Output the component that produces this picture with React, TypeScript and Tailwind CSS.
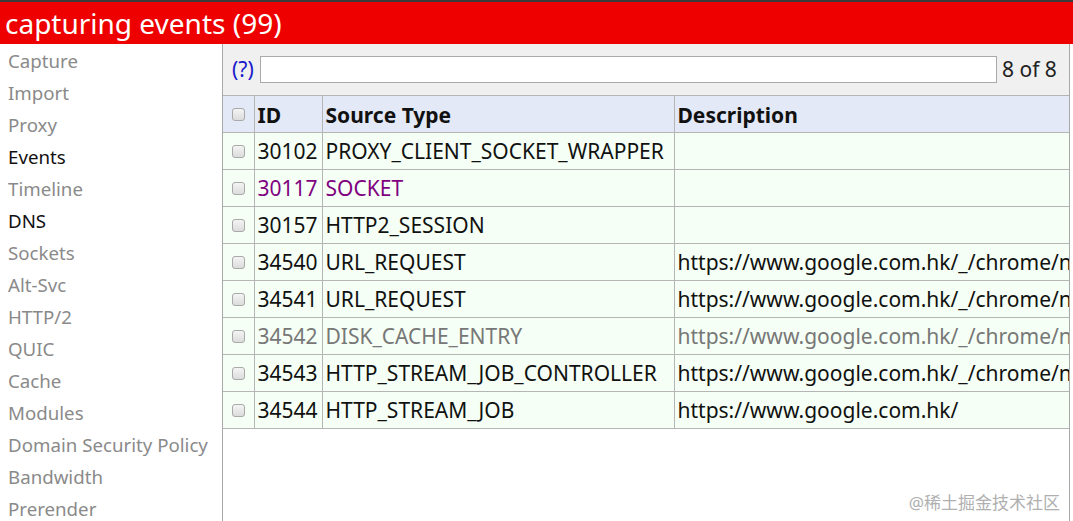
import React from 'react'

const NAV = [
  { label: 'Capture' },
  { label: 'Import' },
  { label: 'Proxy' },
  { label: 'Events', active: true },
  { label: 'Timeline' },
  { label: 'DNS', active: true },
  { label: 'Sockets' },
  { label: 'Alt-Svc' },
  { label: 'HTTP/2' },
  { label: 'QUIC' },
  { label: 'Cache' },
  { label: 'Modules' },
  { label: 'Domain Security Policy' },
  { label: 'Bandwidth' },
  { label: 'Prerender' },
]

interface Row {
  id:    number
  type:  string
  desc:  string
  tone?: 'purple' | 'gray'
}

const ROWS: Row[] = [
  { id: 30102, type: 'PROXY_CLIENT_SOCKET_WRAPPER', desc: '' },
  { id: 30117, type: 'SOCKET',                       desc: '', tone: 'purple' },
  { id: 30157, type: 'HTTP2_SESSION',                desc: '' },
  { id: 34540, type: 'URL_REQUEST',                  desc: 'https://www.google.com.hk/_/chrome/newtab' },
  { id: 34541, type: 'URL_REQUEST',                  desc: 'https://www.google.com.hk/_/chrome/newtab' },
  { id: 34542, type: 'DISK_CACHE_ENTRY',             desc: 'https://www.google.com.hk/_/chrome/newtab', tone: 'gray' },
  { id: 34543, type: 'HTTP_STREAM_JOB_CONTROLLER',   desc: 'https://www.google.com.hk/_/chrome/newtab' },
  { id: 34544, type: 'HTTP_STREAM_JOB',              desc: 'https://www.google.com.hk/' },
]

function Box() {
  return (
    <span className="block w-[13px] h-[13px] rounded-[3px] border border-[#a9a9a9] bg-gradient-to-b from-[#f4f4f4] to-[#dcdcdc]" />
  )
}

export default function App() {
  return (
    <div className="w-[1073px] h-[521px] overflow-hidden bg-white font-['Noto_Sans',sans-serif] relative">
      {/* title bar */}
      <div className="h-[44px] bg-[#ee0000] border-t-2 border-[#3a3a3a] flex items-center px-[5px]">
        <span className="text-white text-[28px] leading-none">capturing events (99)</span>
      </div>

      <div className="flex h-[477px]">
        {/* sidebar */}
        <ul className="w-[222px] shrink-0 pt-[1px] pl-[8px]">
          {NAV.map(n => (
            <li
              key={n.label}
              className={`h-[32px] leading-[32px] text-[18.7px] whitespace-nowrap ${n.active ? 'text-[#111]' : 'text-[#8a8a8a]'}`}
            >
              {n.label}
            </li>
          ))}
        </ul>

        {/* main */}
        <div className="w-[848px] border-l border-r border-[#a8a8a8] overflow-hidden">
          <div className="h-[51px] bg-[#f0f0f0] flex items-center pl-[9px]">
            <span className="text-[#1a1acc] text-[21px] w-[28px]">(?)</span>
            <div className="w-[737px] h-[27px] bg-white border border-[#a9a9a9] shrink-0" />
            <span className="text-[21px] text-[#222] whitespace-nowrap ml-[5px]">8 of 8</span>
          </div>

          <table className="table-fixed border-collapse text-[21px] w-[846px]">
            <colgroup>
              <col className="w-[31px]" />
              <col className="w-[68px]" />
              <col className="w-[352px]" />
              <col className="w-[395px]" />
            </colgroup>
            <thead>
              <tr className="h-[37px] bg-[#e3e9f7]">
                <th className="border border-l-0 border-[#b5b5b5] pl-[9px] text-left"><Box /></th>
                <th className="border border-[#b5b5b5] px-[3px] pt-[3px] text-left font-bold text-[#111]">ID</th>
                <th className="border border-[#b5b5b5] px-[3px] pt-[3px] text-left font-bold text-[#111]">Source Type</th>
                <th className="border border-r-0 border-[#b5b5b5] px-[3px] pt-[3px] text-left font-bold text-[#111]">Description</th>
              </tr>
            </thead>
            <tbody>
              {ROWS.map(r => {
                const color =
                  r.tone === 'purple' ? 'text-[#800080]' : r.tone === 'gray' ? 'text-[#777]' : 'text-[#111]'
                return (
                  <tr key={r.id} className={`h-[37px] bg-[#f5fff5] ${color}`}>
                    <td className="border border-l-0 border-[#b5b5b5] pl-[9px]"><Box /></td>
                    <td className="border border-[#b5b5b5] px-[3px] pt-[2px] whitespace-nowrap overflow-hidden">{r.id}</td>
                    <td className="border border-[#b5b5b5] px-[3px] pt-[2px] whitespace-nowrap overflow-hidden">{r.type}</td>
                    <td className="border border-r-0 border-[#b5b5b5] px-[3px] pt-[2px] whitespace-nowrap overflow-hidden">{r.desc}</td>
                  </tr>
                )
              })}
            </tbody>
          </table>
        </div>
      </div>

      <span className="absolute right-[13px] bottom-[6px] text-[17px] text-[#b0b0b0] font-['Noto_Sans','Noto_Sans_CJK_SC',sans-serif]">
        @稀土掘金技术社区
      </span>
    </div>
  )
}
